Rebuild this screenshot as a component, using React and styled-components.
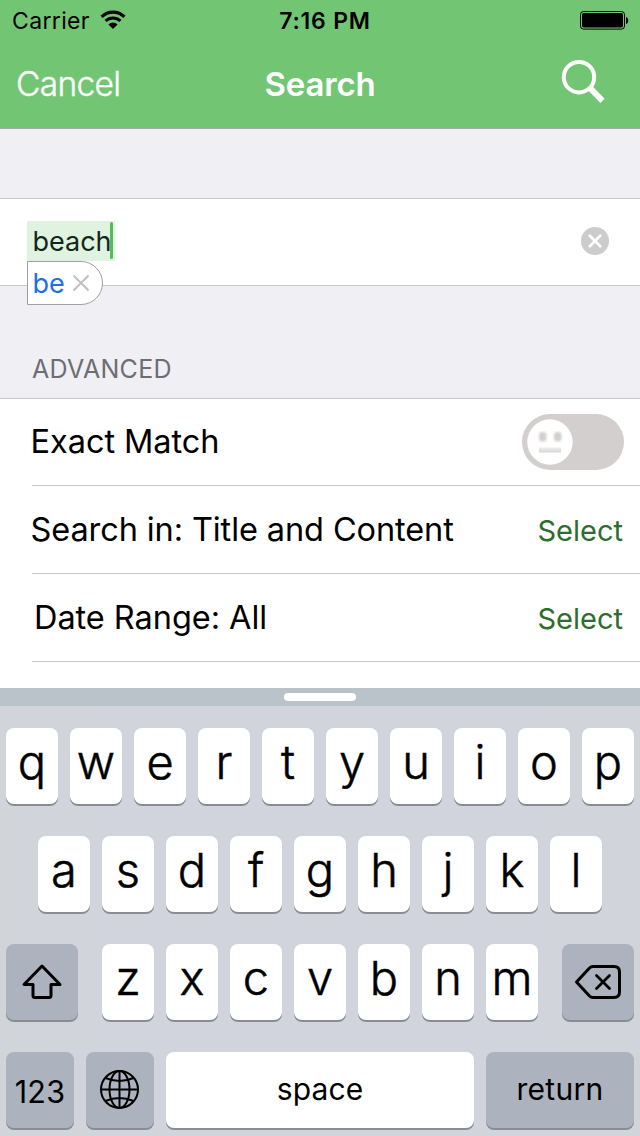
import React from "react";
import styled, { createGlobalStyle } from "styled-components";

const GlobalStyle = createGlobalStyle`
  * { box-sizing: border-box; }
  body {
    margin: 0;
    background: #efeff4;
    font-family: Inter, "Liberation Sans", sans-serif;
    -webkit-font-smoothing: antialiased;
  }
`;

const Screen = styled.main`
  width: 640px;
  height: 1136px;
  overflow: hidden;
  display: flex;
  flex-direction: column;
  background: #efeff4;
  color: #000;
  white-space: pre;
`;

const Header = styled.header`
  height: 129px;
  flex: none;
  background: #72c673;
  border-bottom: 1px solid #a7a7aa;
`;

const StatusBar = styled.div`
  height: 40px;
  display: grid;
  grid-template-columns: 1fr auto 1fr;
  font-size: 23px;
  line-height: 42px;
  padding: 0 11px 0 12px;
`;

const Carrier = styled.span`
  display: flex;
  align-items: flex-start;
  gap: 10px;
  letter-spacing: 0.35px;

  svg { margin-top: 10px; }
`;

const Clock = styled.span`
  font-weight: 600;
  letter-spacing: 0.8px;
  padding-left: 9px;
`;

const Battery = styled.svg`
  justify-self: end;
  margin-top: 10px;
`;

const NavBar = styled.nav`
  height: 88px;
  display: grid;
  grid-template-columns: 1fr auto 1fr;
  padding: 0 35px 0 16px;
  color: #fff;
  line-height: 88px;
  font-size: 33.5px;
`;

const CancelButton = styled.span`
  font-weight: 300;
  letter-spacing: -0.7px;
  -webkit-text-stroke: 0.4px currentColor;
`;

const Title = styled.h1`
  margin: 0 0 0 19px;
  font-size: 33px;
  font-weight: 600;
  letter-spacing: -0.2px;
`;

const SearchIcon = styled.svg`
  justify-self: end;
  margin-top: 18px;
`;

const SearchField = styled.section`
  margin-top: 69px;
  height: 88px;
  flex: none;
  background: #fff;
  border: solid #c8c7cc;
  border-width: 1px 0;
  display: flex;
  justify-content: space-between;
  padding: 22px 30px 0 27px;
`;

const Marked = styled.div`
  position: relative;
  width: 88px;
  height: 40px;
  padding-left: 5.5px;
  background: #e0f3e0;
  color: #14261a;
  font-size: 27px;
  line-height: 42px;
`;

const Caret = styled.i`
  position: absolute;
  left: 82.5px;
  top: 1px;
  width: 3.5px;
  height: 37px;
  border-radius: 1.5px;
  background: #57bb58;
`;

const Suggestion = styled.div`
  position: absolute;
  left: 0;
  top: 40px;
  width: 76px;
  height: 44px;
  display: flex;
  gap: 8px;
  padding-left: 4.5px;
  border: 1px solid #a0a0a0;
  border-radius: 0 22px 22px 0;
  background: #fff;
  color: #1a72e0;
  line-height: 43px;

  svg { margin-top: 13px; }
`;

const ClearIcon = styled.svg`
  margin-top: 6px;
`;

const SectionTitle = styled.h2`
  margin: 0;
  height: 112px;
  flex: none;
  padding: 66px 0 0 32px;
  font-size: 25px;
  font-weight: 400;
  line-height: 34px;
  letter-spacing: 0.3px;
  color: #6d6d72;
`;

const List = styled.section`
  height: 290px;
  flex: none;
  background: #fff;
  border-top: 1px solid #c8c7cc;
`;

const Row = styled.div`
  height: ${(p) => (p.$first ? 87 : 88)}px;
  margin-left: 32px;
  padding-right: 17px;
  border-bottom: 1px solid #c8c7cc;
  display: flex;
  justify-content: space-between;
  line-height: ${(p) => (p.$first ? 86 : 88)}px;
`;

const Label = styled.span`
  font-size: 32.5px;
  margin-left: ${(p) => p.$shift}px;
  letter-spacing: ${(p) => p.$track}px;
`;

const SelectLink = styled.span`
  font-size: 29px;
  line-height: 90px;
  color: #2d6d2d;
`;

const Toggle = styled.svg`
  margin: 15px -1px 0 0;
`;

const Keyboard = styled.section`
  height: 448px;
  flex: none;
  background: linear-gradient(90deg, #d1d4d8, #d1d4dd 18%, #d1d4dd 80%, #d1d4d9);
`;

const Grabber = styled.div`
  height: 18px;
  display: flex;
  justify-content: center;
  background: #bac2ca;

  &::before {
    content: "";
    width: 72px;
    height: 8px;
    margin-top: 5px;
    border-radius: 4px;
    background: #fff;
  }
`;

const Keys = styled.div`
  display: flex;
  flex-direction: column;
  gap: 32px;
  padding: 22px 6px 0;
`;

const KeyRow = styled.div`
  display: flex;
  justify-content: center;
  gap: 12px;
`;

const LetterGroup = styled(KeyRow)`
  margin: 0 12px;
`;

const Key = styled.div`
  width: ${(p) => p.$width || 52}px;
  height: 76px;
  display: flex;
  justify-content: center;
  border-radius: 8px;
  background: ${(p) => (p.$dark ? "#acb3be" : "#fff")};
  box-shadow: 0 2px 0 #898c90;
  font-size: 47px;
  font-weight: 300;
  line-height: 67px;
  -webkit-text-stroke: 0.5px #000;
`;

const WordKey = styled(Key)`
  font-size: ${(p) => p.$size}px;
  font-weight: 400;
  line-height: ${(p) => p.$line}px;
  letter-spacing: ${(p) => p.$track}px;
  -webkit-text-stroke: 0;
`;

const letters = (text) => text.split("").map((c) => <Key key={c}>{c}</Key>);

export default function App() {
  return (
    <Screen>
      <GlobalStyle />
      <Header>
        <StatusBar>
          <Carrier>
            Carrier
            <svg width="26" height="20" viewBox="0 0 26 20">
              <g fill="none" stroke="#000">
                <path d="M1.6 6.8a16 16 0 0 1 22.8 0" strokeWidth="3.2" />
                <path d="M5.6 11a10.5 10.5 0 0 1 14.8 0" strokeWidth="3" />
              </g>
              <path d="M13 19 8.4 14.5a6.5 6.5 0 0 1 9.2 0z" />
            </svg>
          </Carrier>
          <Clock>7:16 PM</Clock>
          <Battery width="50" height="20" viewBox="0 0 50 20">
            <rect x="1.5" y="1.5" width="44" height="17.6" rx="3" fill="none" stroke="#000" />
            <rect x="3" y="3" width="41" height="14.6" rx="1.8" />
            <path d="M47 7c3 .8 3 6.2 0 7z" />
          </Battery>
        </StatusBar>
        <NavBar>
          <CancelButton>Cancel</CancelButton>
          <Title>Search</Title>
          <SearchIcon width="44" height="46" viewBox="0 0 44 46" fill="none" stroke="#fff">
            <circle cx="18" cy="19.2" r="15.2" strokeWidth="4" />
            <path d="M28.5 29.5 41.5 42.8" strokeWidth="6" />
          </SearchIcon>
        </NavBar>
      </Header>

      <SearchField>
        <Marked>
          beach
          <Caret />
          <Suggestion>
            be
            <svg width="16" height="16" viewBox="0 0 16 16" stroke="#c0c0c0" strokeWidth="2">
              <path d="M.5.5l15 15M15.5.5l-15 15" />
            </svg>
          </Suggestion>
        </Marked>
        <ClearIcon width="30" height="30" viewBox="0 0 30 30">
          <circle cx="15" cy="14" r="14" fill="#ccc" />
          <path d="M9.8 8.8l10.4 10.4M20.2 8.8 9.8 19.2" stroke="#fff" strokeWidth="2.7" strokeLinecap="round" />
        </ClearIcon>
      </SearchField>

      <SectionTitle>ADVANCED</SectionTitle>

      <List>
        <Row $first>
          <Label $shift={-1.5} $track={-0.05}>Exact Match</Label>
          <Toggle width="102" height="56" viewBox="0 0 102 56">
            <defs>
              <linearGradient id="mouth" x2="0" y2="1">
                <stop offset="0" stopColor="#eee" />
                <stop offset="1" stopColor="#d8d5d5" />
              </linearGradient>
              <filter id="soft"><feGaussianBlur stdDeviation=".8" /></filter>
            </defs>
            <rect width="102" height="56" rx="28" fill="#d3cfcf" />
            <circle cx="28" cy="28" r="22.7" fill="#fff" />
            <g fill="#d3cfcf" filter="url(#soft)">
              <rect x="17" y="18" width="7.5" height="9.5" rx="3" />
              <rect x="32" y="18" width="7.5" height="9.5" rx="3" />
            </g>
            <rect x="17" y="33.5" width="22" height="5" fill="url(#mouth)" />
          </Toggle>
        </Row>
        <Row>
          <Label $shift={-1.5} $track={-0.1}>Search in: Title and Content</Label>
          <SelectLink>Select</SelectLink>
        </Row>
        <Row>
          <Label $shift={2} $track={-0.05}>Date Range: All</Label>
          <SelectLink>Select</SelectLink>
        </Row>
      </List>

      <Keyboard>
        <Grabber />
        <Keys>
          <KeyRow>{letters("qwertyuiop")}</KeyRow>
          <KeyRow>{letters("asdfghjkl")}</KeyRow>
          <KeyRow>
            <Key $dark $width={72}>
              <svg width="72" height="76" viewBox="0 0 72 76" fill="none" stroke="#000" strokeWidth="3" strokeLinejoin="round">
                <path d="M36 22 18 40.5h9v11q0 2 2 2h14q2 0 2-2v-11h9z" />
              </svg>
            </Key>
            <LetterGroup>{letters("zxcvbnm")}</LetterGroup>
            <Key $dark $width={72}>
              <svg width="72" height="76" viewBox="0 0 72 76" fill="none" stroke="#000" strokeWidth="3" strokeLinecap="round" strokeLinejoin="round">
                <path d="M31 22.5H52q5.5 0 5.5 5.5v20q0 5.5-5.5 5.5H31q-2 0-3.5-1.5L14.5 38 27.5 24q1.5-1.5 3.5-1.5z" />
                <path d="m34.5 31.5 13 13m0-13-13 13" strokeWidth="2.8" />
              </svg>
            </Key>
          </KeyRow>
          <KeyRow>
            <WordKey $dark $width={68} $size={30.5} $line={79} $track={0.2}>123</WordKey>
            <Key $dark $width={68}>
              <svg width="68" height="76" viewBox="0 0 68 76" fill="none" stroke="#000" strokeWidth="2">
                <circle cx="33.5" cy="37.5" r="18.5" />
                <ellipse cx="33.5" cy="37.5" rx="10" ry="18.5" />
                <path d="M33.5 19v37M15 37.5h37M19.5 26q14 6 28 0M19.5 49q14-6 28 0" />
              </svg>
            </Key>
            <WordKey $width={308} $size={30} $line={74} $track={0.1}>space</WordKey>
            <WordKey $dark $width={148} $size={30} $line={74} $track={0.3}>return</WordKey>
          </KeyRow>
        </Keys>
      </Keyboard>
    </Screen>
  );
}
